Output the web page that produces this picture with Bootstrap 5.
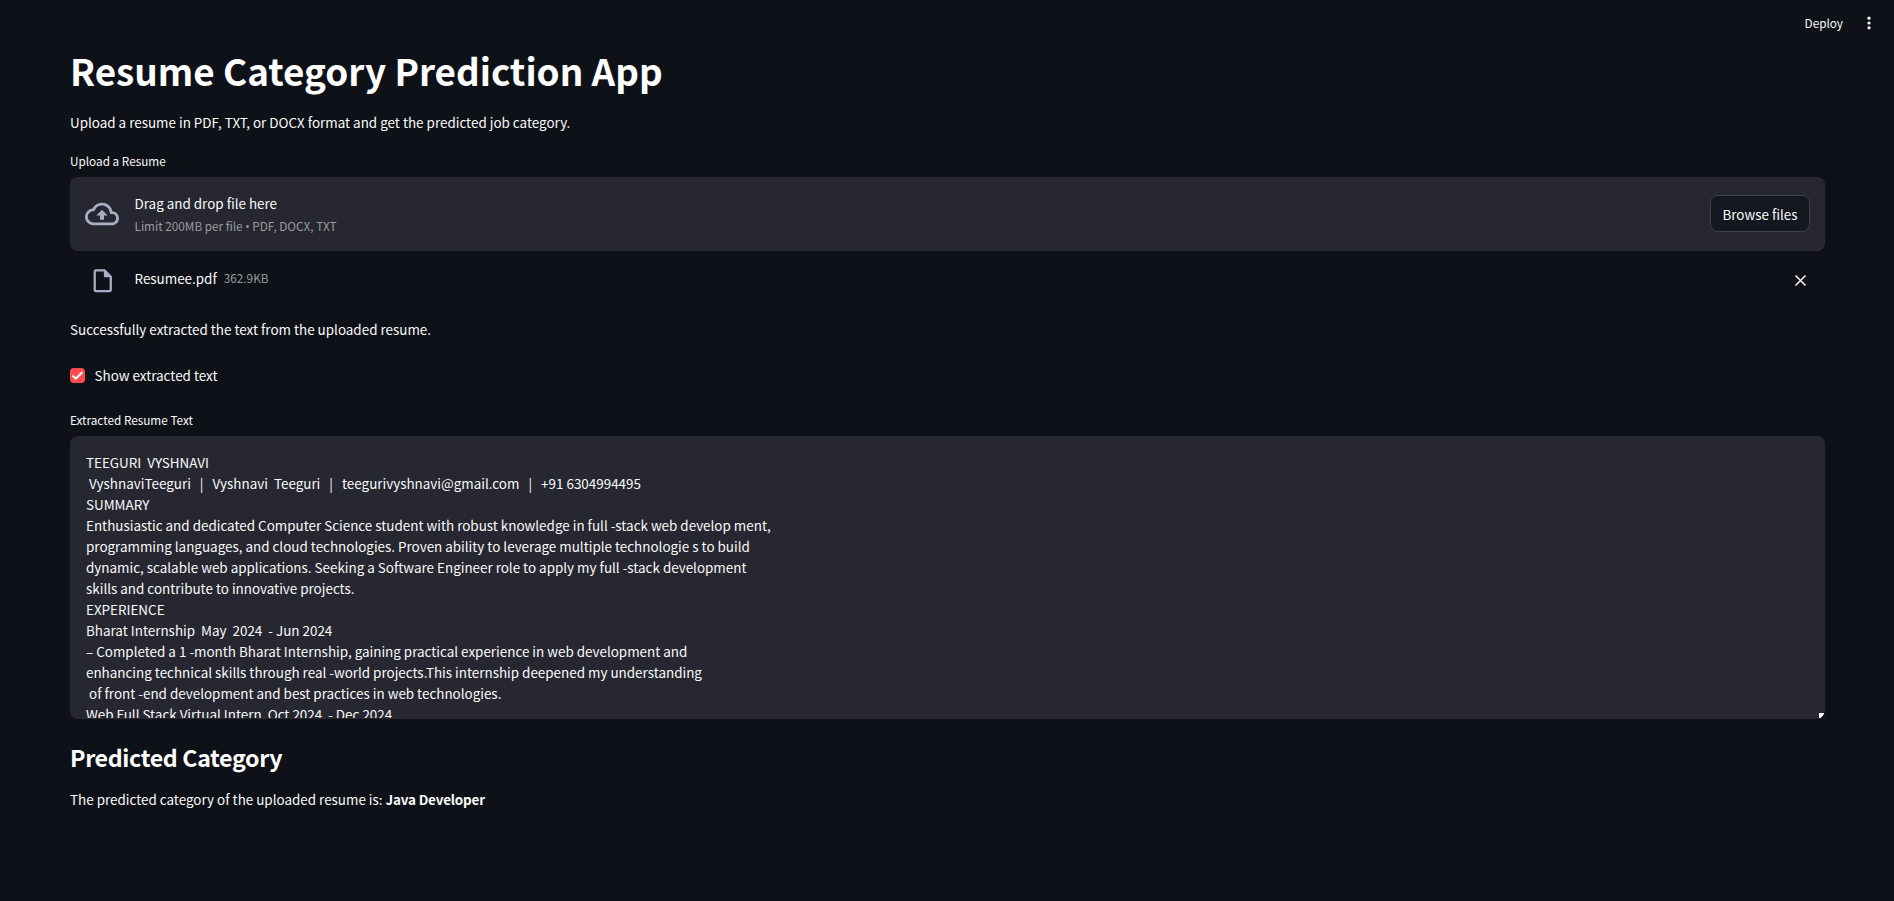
<!DOCTYPE html>
<html lang="en" data-bs-theme="dark">
<head>
<meta charset="utf-8">
<meta name="viewport" content="width=device-width, initial-scale=1">
<title>Resume Category Prediction App</title>
<link href="https://cdn.jsdelivr.net/npm/bootstrap@5.3.0/dist/css/bootstrap.min.css" rel="stylesheet">
<style>
  body { background: #0e1117; color: #fafafa; font-family: "Noto Sans CJK SC", "Noto Sans CJK JP", sans-serif; font-size: 13.43px; line-height: 24px; height: 901px; overflow: hidden; }
  .topbar { height: 45px; padding: 1px 18px 0 0; gap: 19px; }
  .app-main { padding: 0 69px 0 70px; }
  h1 { font-size: 36.85px; line-height: 50px; font-weight: 700; margin: 0 0 15px; }
  h2 { font-size: 23.2px; line-height: 32px; font-weight: 600; letter-spacing: -.34px; margin: 22px 0 14px; }
  strong { letter-spacing: -.17px; }
  .field-label { font-size: 11.75px; line-height: 20px; margin-bottom: 6px; display: block; }
  .panel { background: #262730; border-radius: 7.5px; }
  .drop { height: 74px; padding: 0 15px; gap: 15.5px; }
  .drop .btn, .drop > svg { margin-bottom: 1px; }
  .drop-title { line-height: 21px; margin-bottom: 2px; }
  .hint { font-size: 11.75px; line-height: 20px; color: #9a9b9f; }
  .dot { font-family: "Open Sans", sans-serif; line-height: 1; }
  .btn-browse { --bs-btn-color: #fafafa; --bs-btn-bg: #131720; --bs-btn-border-color: #41444c; --bs-btn-border-radius: 7.5px; --bs-btn-font-size: 13.43px; width: 100px; height: 37px; padding: 0; line-height: 24px; }
  .file-row { height: 29px; margin-top: 15px; padding: 0 17px 0 19px; }
  .file-name { margin-left: 18px; padding-bottom: 6px; }
  .check-box { width: 15px; height: 15px; background: #ff4b4b; border-radius: 4px; }
  .extract { font-size: 13.43px; line-height: 21px; height: 283px; padding: 16px 16px 0; white-space: pre; overflow: hidden; resize: none; border: 0; border-bottom: 1px solid #262730; color: #fafafa; outline: 0; display: block; }
  .grip { right: 1px; bottom: 1px; }
</style>
</head>
<body>
<header class="topbar d-flex justify-content-end align-items-center">
  <span class="field-label mb-0">Deploy</span>
  <svg width="14" height="14" viewBox="0 0 14 14" fill="#fafafa"><circle cx="7" cy="2.2" r="1.6"/><circle cx="7" cy="7" r="1.6"/><circle cx="7" cy="11.8" r="1.6"/></svg>
</header>
<main class="app-main">
  <h1>Resume Category Prediction App</h1>
  <p style="margin-bottom:17px">Upload a resume in PDF, TXT, or DOCX format and get the predicted job category.</p>
  <span class="field-label">Upload a Resume</span>
  <section class="panel drop d-flex align-items-center">
    <svg width="34" height="34" viewBox="0 0 24 24" fill="#a9aec4"><path d="M19.35 10.04A7.49 7.49 0 0 0 12 4C9.11 4 6.6 5.64 5.35 8.04A5.994 5.994 0 0 0 0 14c0 3.31 2.69 6 6 6h13c2.76 0 5-2.24 5-5 0-2.64-2.05-4.78-4.65-4.96zM19 18H6c-2.21 0-4-1.79-4-4 0-2.05 1.53-3.76 3.56-3.97l1.07-.11.5-.95A5.469 5.469 0 0 1 12 6c2.62 0 4.88 1.86 5.39 4.43l.3 1.5 1.53.11A2.98 2.98 0 0 1 22 15c0 1.65-1.35 3-3 3zM8 13h2.55v3h2.9v-3H16l-4-4z"/></svg>
    <div class="flex-grow-1">
      <div class="drop-title">Drag and drop file here</div>
      <div class="hint">Limit 200MB per file <span class="dot">•</span> PDF, DOCX, TXT</div>
    </div>
    <button class="btn btn-browse" type="button">Browse files</button>
  </section>
  <div class="file-row d-flex align-items-center">
    <svg width="27.5" height="27.5" viewBox="0 0 24 24" fill="#a9aec4"><path d="M14 2H6c-1.100 0-1.990.9-1.990 2L4 20c0 1.100.890 2 1.990 2H18c1.100 0 2-.9 2-2V8l-6-6zM6 20V4h7v5h5v11H6z"/></svg>
    <div class="file-name d-flex align-items-center">
      <span>Resumee.pdf</span>
      <span class="hint" style="margin-left:7px">362.9KB</span>
    </div>
    <svg class="ms-auto" width="15" height="15" viewBox="0 0 15 15" fill="none" stroke="#fafafa" stroke-width="1.5"><path d="M2.500 2.500l10 10M12.500 2.500l-10 10"/></svg>
  </div>
  <p style="margin:22px 0">Successfully extracted the text from the uploaded resume.</p>
  <div class="d-flex align-items-center" style="gap:9.5px;margin-bottom:23px">
    <span class="check-box d-flex align-items-center justify-content-center"><svg width="13" height="11" viewBox="0 0 13 11" fill="none" stroke="#fff" stroke-width="2"><path d="M1.500 5.500l3.400 3.200L11.500 2"/></svg></span>
    <span>Show extracted text</span>
  </div>
  <label class="field-label" for="extract">Extracted Resume Text</label>
  <div class="position-relative">
<textarea id="extract" class="extract panel w-100" readonly spellcheck="false">TEEGURI  VYSHNAVI
 VyshnaviTeeguri   |   Vyshnavi  Teeguri   |   teegurivyshnavi@gmail.com   |   +91 6304994495
SUMMARY
Enthusiastic and dedicated Computer Science student with robust knowledge in full -stack web develop ment,
programming languages, and cloud technologies. Proven ability to leverage multiple technologie s to build
dynamic, scalable web applications. Seeking a Software Engineer role to apply my full -stack development
skills and contribute to innovative projects.
EXPERIENCE
Bharat Internship  May  2024  - Jun 2024
– Completed a 1 -month Bharat Internship, gaining practical experience in web development and
enhancing technical skills through real -world projects.This internship deepened my understanding
 of front -end development and best practices in web technologies.
Web Full Stack Virtual Intern  Oct 2024  - Dec 2024</textarea>
    <svg class="grip position-absolute" width="5" height="5" viewBox="0 0 5 5" fill="#fafafa"><path d="M0 0H5V1.500H4V3H3V4H2V5H0z"/></svg>
  </div>
  <h2>Predicted Category</h2>
  <p class="mb-0">The predicted category of the uploaded resume is: <strong>Java Developer</strong></p>
</main>
<script src="https://cdn.jsdelivr.net/npm/bootstrap@5.3.0/dist/js/bootstrap.bundle.min.js"></script>
</body>
</html>
